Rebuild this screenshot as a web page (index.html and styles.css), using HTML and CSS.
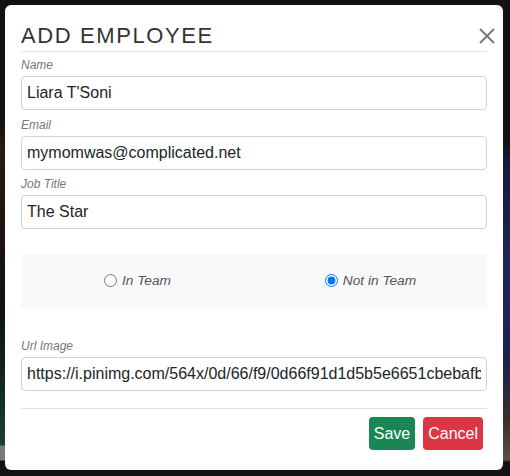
FILE: index.html
```html
<!DOCTYPE html>
<html lang="en">
<head>
<meta charset="utf-8">
<title>Add Employee</title>
<link rel="stylesheet" href="styles.css">
</head>
<body>
<div class="backdrop">
  <div class="modal">
    <div class="modal-header">
      <h2 class="modal-title">ADD EMPLOYEE</h2>
      <button class="close" type="button" aria-label="Close">
        <svg width="16" height="16" viewBox="0 0 16 16"><path d="M1 1 L15 15 M15 1 L1 15" stroke="#7a7a7a" stroke-width="2" fill="none"/></svg>
      </button>
    </div>
    <hr class="rule">
    <form class="form">
      <label class="field-label first">Name</label>
      <input class="field" type="text" value="Liara T'Soni">
      <label class="field-label">Email</label>
      <input class="field" type="text" value="mymomwas@complicated.net">
      <label class="field-label">Job Title</label>
      <input class="field" type="text" value="The Star">
      <div class="team-box">
        <label class="team-opt"><input type="radio" name="team"> In Team</label>
        <label class="team-opt"><input type="radio" name="team" checked> Not in Team</label>
      </div>
      <label class="field-label url-label">Url Image</label>
      <input class="field" type="text" value="https://i.pinimg.com/564x/0d/66/f9/0d66f91d1d5b5e6651cbebafb5c1e2f0.jpg">
    </form>
    <hr class="rule footer-rule">
    <div class="modal-footer">
      <button class="btn btn-save" type="button">Save</button>
      <button class="btn btn-cancel" type="button">Cancel</button>
    </div>
  </div>
</div>
</body>
</html>
```
FILE: styles.css
```css
html, body {
  margin: 0;
  padding: 0;
}
body {
  width: 510px;
  height: 476px;
  overflow: hidden;
  font-family: "Liberation Sans", Arial, sans-serif;
  background-color: #121212;
  background-image:
    linear-gradient(to bottom, transparent 0, transparent 120px, #2a1a12 150px, #1b120e 250px, #0d1414 320px, #163430 420px, #1d4038 445px, #7a7a7a 446px, #7a7a7a 460px, #121212 461px),
    linear-gradient(to bottom, transparent 0, transparent 140px, #141a3a 160px, #1d2656 260px, #1a2250 360px, #3a3028 420px, #5a5048 460px, #121212 462px);
  background-size: 5px 476px, 7px 476px;
  background-position: left top, right top;
  background-repeat: no-repeat;
}
.backdrop {
  padding: 5px 7px 5px 5px;
}
.modal {
  width: 498px;
  box-sizing: border-box;
  background: #fff;
  border-radius: 6px;
  padding: 18px 16px 20px 16px;
}
.modal-header {
  display: flex;
  align-items: center;
  justify-content: space-between;
}
.modal-title {
  margin: 0;
  font-size: 22px;
  line-height: 26px;
  font-weight: normal;
  letter-spacing: 1.6px;
  color: #333;
}
.close {
  border: 0;
  background: none;
  padding: 0;
  margin-right: -8px;
  width: 16px;
  height: 16px;
  display: flex;
}
.rule {
  border: 0;
  border-top: 1px solid #dee2e6;
  margin: 2px 0 0 0;
}
.form {
  display: flex;
  flex-direction: column;
}
.field-label {
  display: block;
  font-size: 12px;
  line-height: 16px;
  font-style: italic;
  color: #777;
  margin: 6.5px 0 3px 0;
}
.field-label.first {
  margin-top: 5px;
}
.field {
  box-sizing: border-box;
  height: 34px;
  width: 100%;
  border: 1px solid #ced4da;
  border-radius: 4px;
  padding: 0 5px;
  font-family: "Liberation Sans", Arial, sans-serif;
  font-size: 16px;
  color: #212529;
  background: #fff;
  outline: none;
}
.team-box {
  display: grid;
  grid-template-columns: 1fr 1fr;
  align-items: center;
  height: 55px;
  margin-top: 25px;
  background: #f8f9fa;
}
.team-opt {
  display: flex;
  align-items: center;
  justify-content: center;
  font-size: 13.7px;
  font-style: italic;
  color: #555;
  padding-bottom: 2px;
}
.team-opt input {
  margin: 0 5px 0 0;
  width: 13px;
  height: 13px;
}
.url-label {
  margin-top: 29px;
}
.footer-rule {
  margin-top: 17px;
}
.modal-footer {
  display: flex;
  justify-content: flex-end;
  gap: 8px;
  margin-top: 8px;
  padding-right: 4px;
}
.btn {
  height: 33px;
  border: 0;
  border-radius: 4px;
  padding: 0 5px;
  font-family: "Liberation Sans", Arial, sans-serif;
  font-size: 16px;
  color: #fff;
}
.btn-save {
  background: #198754;
}
.btn-cancel {
  background: #dc3545;
}
```
